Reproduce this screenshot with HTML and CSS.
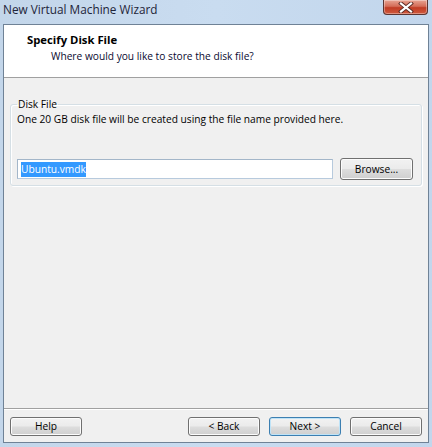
FILE: index.html
```html
<!DOCTYPE html>
<html>
<head>
<meta charset="utf-8">
<link rel="stylesheet" href="styles.css">
</head>
<body>
<div class="window">
  <div class="titlebar">
    <span class="title">New Virtual Machine Wizard</span>
    <span class="close">
      <svg width="16" height="11" viewBox="0 0 16 11"><path d="M3 1.5 L13 9.5 M13 1.5 L3 9.5" stroke="#5a2a24" stroke-width="4" stroke-linecap="square"/><path d="M3 1.5 L13 9.5 M13 1.5 L3 9.5" stroke="#ffffff" stroke-width="2.2" stroke-linecap="square"/></svg>
    </span>
  </div>
  <div class="client">
    <div class="header">
      <div class="h-title">Specify Disk File</div>
      <div class="h-sub">Where would you like to store the disk file?</div>
    </div>
    <div class="content">
      <fieldset class="group">
        <legend>Disk File</legend>
        <div class="desc">One 20 GB disk file will be created using the file name provided here.</div>
        <div class="row">
          <div class="input"><span class="sel">Ubuntu.vmdk</span></div>
          <button class="btn browse">Browse...</button>
        </div>
      </fieldset>
    </div>
    <div class="footer">
      <button class="btn">Help</button>
      <div class="spacer"></div>
      <button class="btn">&lt; Back</button>
      <button class="btn default">Next &gt;</button>
      <button class="btn">Cancel</button>
    </div>
  </div>
</div>
</body>
</html>
```
FILE: styles.css
```css
* { box-sizing: border-box; }
html, body { margin: 0; padding: 0; }
body {
  width: 432px;
  height: 447px;
  overflow: hidden;
  font-family: "Open Sans", "Liberation Sans", sans-serif;
  font-size: 10.2px;
  color: #000;
}
.window {
  width: 432px;
  height: 447px;
  display: flex;
  flex-direction: column;
  background: linear-gradient(90deg, #c3d6ea 0%, #c9dcf0 50%, #c2d6ec 100%);
}
.titlebar {
  height: 24px;
  display: flex;
  align-items: flex-start;
  justify-content: space-between;
  padding-left: 3px;
  padding-right: 4px;
}
.title {
  font-size: 11.8px;
  line-height: 15px;
  padding-top: 2px;
  color: #1e2438;
}
.close {
  width: 45px;
  height: 15px;
  border: 1px solid #5b3532;
  border-top: none;
  border-radius: 0 0 4px 4px;
  background: linear-gradient(180deg, #e8a493 0%, #d46d58 45%, #c13c24 55%, #cf5a3e 100%);
  display: flex;
  align-items: center;
  justify-content: center;
  box-shadow: inset 0 0 0 1px rgba(255,255,255,0.35);
}
.close svg { display: block; }
.client {
  flex: 1;
  margin: 0 3px 4px 3px;
  border: 1px solid #6f8296;
  background: #f0f0f0;
  display: flex;
  flex-direction: column;
}
.header {
  height: 53px;
  background: #ffffff;
  border-bottom: 1px solid #a0a0a0;
  padding: 7px 0 0 23px;
}
.h-title {
  font-weight: 700;
  font-size: 11.3px;
  line-height: 15px;
}
.h-sub {
  padding-left: 24px;
  padding-top: 2px;
  line-height: 15px;
  color: #0a0a30;
}
.content {
  flex: 1;
  padding: 19px 6px 0 6px;
}
.group {
  margin: 0;
  padding: 1px 7px 0 6px;
  height: 89px;
  border: 1px solid #d5dfe5;
  border-radius: 3px;
  box-shadow: inset 1px 1px 0 #fff, 1px 1px 0 #fff;
}
.group legend {
  padding: 0 1px;
  margin-left: 0;
  line-height: 14px;
}
.desc {
  line-height: 15px;
}
.row {
  display: flex;
  align-items: center;
  margin-top: 31px;
  gap: 7px;
}
.input {
  width: 316px;
  height: 20px;
  background: #fff;
  border: 1px solid;
  border-color: #a3b6c9 #b7cadd #b7cadd #a3b6c9;
  padding: 2px 0 0 3px;
  line-height: 14px;
}
.sel {
  background: #3399ff;
  color: #fff;
  padding: 0 0 1px 0;
}
.btn {
  font-family: "Open Sans", "Liberation Sans", sans-serif;
  font-size: 10.2px;
  width: 72px;
  height: 19px;
  padding: 0;
  border: 1px solid #707070;
  border-radius: 3px;
  background: linear-gradient(180deg, #f2f2f2 0%, #ebebeb 48%, #dddddd 52%, #cfcfcf 100%);
  box-shadow: inset 0 0 0 1px #fcfcfc;
  color: #000;
  line-height: 15px;
}
.browse {
  width: 73px;
  height: 22px;
}
.default {
  border-color: #3c7fb1;
  box-shadow: inset 0 0 0 1px #bfe3f7;
}
.footer {
  height: 34px;
  border-top: 1px solid #a0a0a0;
  box-shadow: inset 0 1px 0 #fff;
  display: flex;
  align-items: flex-start;
  padding: 8px 6px 0 6px;
  gap: 9px;
}
.spacer { flex: 1; }
```
